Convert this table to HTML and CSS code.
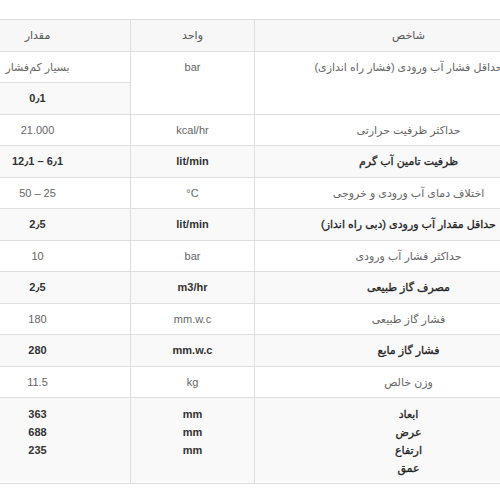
FILE: index.html
```html
<!DOCTYPE html>
<html lang="fa">
<head>
<meta charset="utf-8">
<link rel="stylesheet" href="styles.css">
</head>
<body>
<div class="page">
<table class="spec" dir="rtl">
<colgroup><col class="c-name"><col class="c-unit"><col class="c-val"></colgroup>
<thead>
<tr><th>شاخص</th><th>واحد</th><th>مقدار</th></tr>
</thead>
<tbody>
<tr><td class="name" rowspan="2">حداقل فشار آب ورودی (فشار راه اندازی)</td><td rowspan="2">bar</td><td class="fa">بسیار کم‌فشار</td></tr>
<tr><td><span class="num">0٫1</span></td></tr>
<tr><td class="name">حداکثر ظرفیت حرارتی</td><td>kcal/hr</td><td><span class="num">21.000</span></td></tr>
<tr><td class="name">ظرفیت تامین آب گرم</td><td>lit/min</td><td><span class="num">12٫1 – 6٫1</span></td></tr>
<tr><td class="name">اختلاف دمای آب ورودی و خروجی</td><td><span class="num">°C</span></td><td><span class="num">50 – 25</span></td></tr>
<tr><td class="name">حداقل مقدار آب ورودی (دبی راه انداز)</td><td>lit/min</td><td><span class="num">2٫5</span></td></tr>
<tr><td class="name">حداکثر فشار آب ورودی</td><td>bar</td><td><span class="num">10</span></td></tr>
<tr><td class="name">مصرف گاز طبیعی</td><td>m3/hr</td><td><span class="num">2٫5</span></td></tr>
<tr><td class="name">فشار گاز طبیعی</td><td>mm.w.c</td><td><span class="num">180</span></td></tr>
<tr><td class="name">فشار گاز مایع</td><td>mm.w.c</td><td><span class="num">280</span></td></tr>
<tr><td class="name">وزن خالص</td><td>kg</td><td><span class="num">11.5</span></td></tr>
<tr class="dims"><td class="name">ابعاد<br>عرض<br>ارتفاع<br>عمق</td><td>mm<br>mm<br>mm</td><td><span class="num">363<br>688<br>235</span></td></tr>
</tbody>
</table>
</div>
</body>
</html>
```

FILE: styles.css
```css
html, body {
  margin: 0;
  padding: 0;
  background: #fff;
  overflow: hidden;
}
.page {
  padding-top: 19px;
  width: 700px;
}
.spec {
  margin-left: -56px;
  width: 618px;
  table-layout: fixed;
  border-collapse: collapse;
  font-family: "Liberation Sans", "DejaVu Sans", sans-serif;
  font-size: 11px;
  color: #666;
}
.c-name { width: 308px; }
.c-unit { width: 124px; }
.c-val { width: 186px; }
.spec th, .spec td {
  border: 1px solid #dedede;
  padding: 7px 6px;
  line-height: 16.5px;
  text-align: center;
  vertical-align: top;
}
.spec th {
  background: #f7f7f7;
  font-weight: normal;
  color: #555;
}
.spec tbody tr:nth-child(even) td {
  background: #f9f9f9;
  font-weight: bold;
  color: #333;
}
.spec tbody tr:nth-child(even) td.name {
  font-weight: normal;
  color: #222;
  -webkit-text-stroke: 0.3px #222;
}
.spec .num {
  direction: ltr;
  unicode-bidi: isolate;
}
.spec tr.dims td {
  line-height: 18px;
  padding-top: 7px;
  padding-bottom: 6px;
}
```
